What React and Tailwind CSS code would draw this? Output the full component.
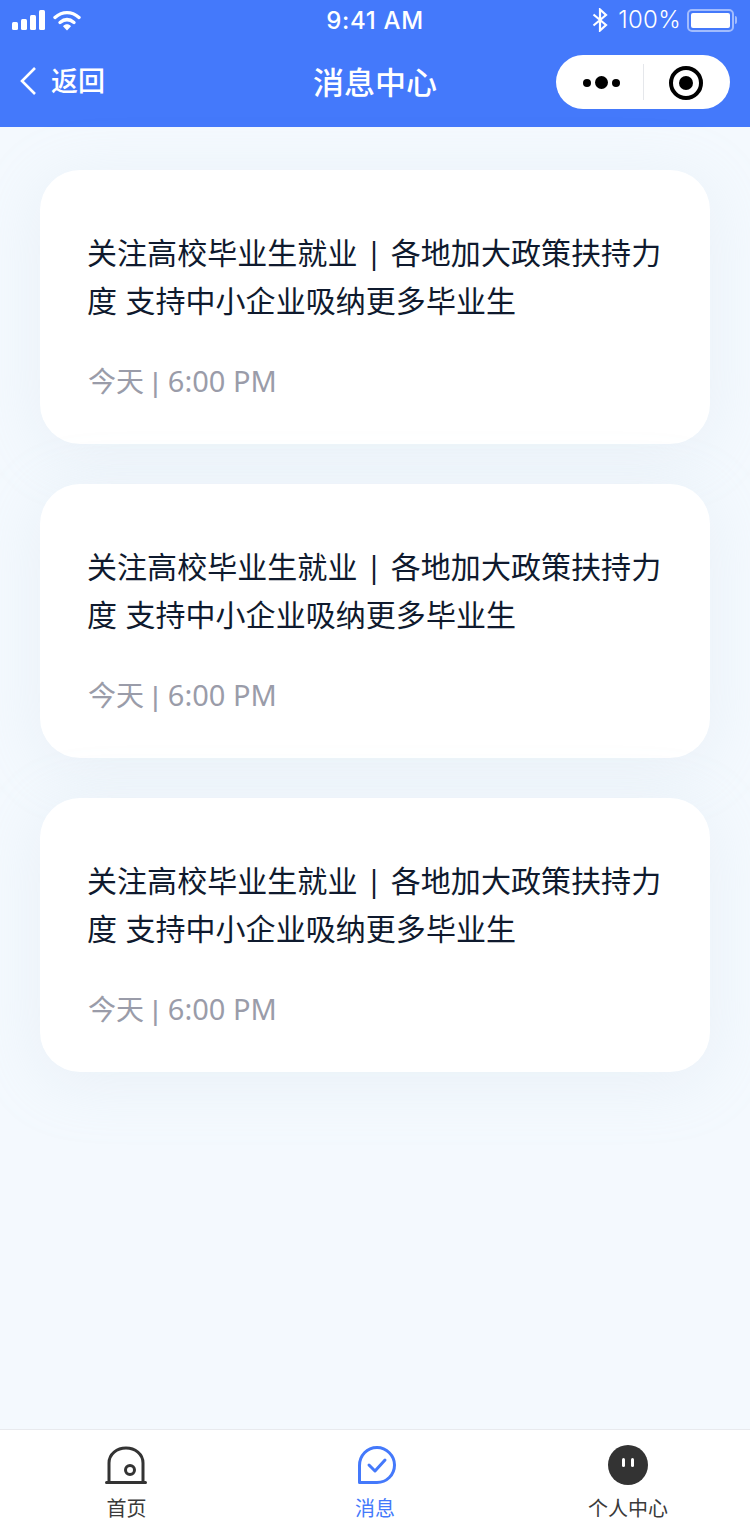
const FONT = "font-['Noto_Sans','Noto_Sans_CJK_SC',sans-serif]";

function StatusBar() {
  return (
    <div className="relative flex h-10 items-center justify-between pl-3 pr-[13px] text-white">
      <div className="flex items-center gap-[8px]">
        <div className="flex items-end gap-[3px]">
          <span className="h-[8px] w-[6px] rounded-[1.5px] bg-white" />
          <span className="h-[11px] w-[6px] rounded-[1.5px] bg-white" />
          <span className="h-[15px] w-[6px] rounded-[1.5px] bg-white" />
          <span className="h-[20px] w-[6px] rounded-[1.5px] bg-white" />
        </div>
        <svg width="28" height="21" viewBox="0 0 28 21" fill="none">
          <path d="M2 7.5C9.5 1 18.5 1 26 7.5" stroke="white" strokeWidth="3.4" strokeLinecap="round" />
          <path d="M7 12.5C11.5 8.8 16.5 8.8 21 12.5" stroke="white" strokeWidth="3.4" strokeLinecap="round" />
          <path d="M10 16.2C12.5 13.6 15.5 13.6 18 16.2L14 20.5Z" fill="white" />
        </svg>
      </div>
      <span className="absolute left-1/2 top-[5px] -translate-x-1/2 font-['Inter',sans-serif] text-[24px] leading-[32px] font-medium tracking-[0.7px]">
        9:41 AM
      </span>
      <div className="flex items-center">
        <svg width="16" height="24" viewBox="0 0 16 24" fill="none" className="mr-[10px]">
          <path d="M1.5 6.5L14 17L8 22.5V1.5L14 7L1.5 17.5" stroke="white" strokeWidth="2.2" />
        </svg>
        <span className="font-['Inter',sans-serif] text-[24px] leading-[32px] font-light tracking-[0.3px]">100%</span>
        <div className="ml-[6px] h-[23px] w-[47px] rounded-[5px] border-2 border-white/50 p-[2px]">
          <div className="h-full w-full rounded-[2px] bg-white" />
        </div>
        <div className="ml-[1px] h-[8px] w-[2px] rounded-r-full bg-white/50" />
      </div>
    </div>
  );
}

function NavBar() {
  return (
    <div className="relative flex h-[87px] items-start justify-between pt-[15px] pl-5 pr-5">
      <div className="flex items-center gap-[15px] pt-[11px] text-white">
        <svg width="16" height="30" viewBox="0 0 16 30" fill="none">
          <path d="M15 2L2 15L15 28" stroke="white" strokeWidth="2.6" />
        </svg>
        <span className="text-[27px] leading-[30px] font-medium">返回</span>
      </div>
      <span className="absolute left-1/2 top-[21px] -translate-x-1/2 text-[31px] leading-[42px] font-medium text-white">
        消息中心
      </span>
      <div className="flex h-[54px] w-[174px] items-center rounded-full bg-white">
        <div className="flex flex-1 items-center justify-center gap-[4px] pt-px pl-[4px]">
          <span className="h-[8px] w-[8px] rounded-full bg-black" />
          <span className="h-[13px] w-[13px] rounded-full bg-black" />
          <span className="h-[8px] w-[8px] rounded-full bg-black" />
        </div>
        <div className="h-[36px] w-px bg-gray-200" />
        <div className="flex w-[86px] items-center justify-center pt-px pr-[2px]">
          <div className="flex h-[34px] w-[34px] items-center justify-center rounded-full border-[4px] border-black">
            <span className="h-[14px] w-[14px] rounded-full bg-black" />
          </div>
        </div>
      </div>
    </div>
  );
}

function MessageCard() {
  return (
    <div className="rounded-[40px] bg-white pl-[47px] pr-[40px] pt-[59px] pb-[41px] shadow-[0_10px_60px_rgba(205,218,228,0.25)]">
      <p className="text-[30px] leading-[48px] tracking-[0.05px] text-[#0f1a2e] [word-spacing:0.5px]">
        关注高校毕业生就业 | 各地加大政策扶持力度 支持中小企业吸纳更多毕业生
      </p>
      <p className="mt-[36px] pl-px text-[28px] leading-[40px] text-[#9a9ca9]">
        今天<span className="font-['Liberation_Sans',sans-serif]">{" | "}</span>
        <span className="ml-px text-[29px]">6:00 PM</span>
      </p>
    </div>
  );
}

function TabBar() {
  return (
    <div className="grid h-[99px] grid-cols-3 border-t border-[#e8eaee] bg-white">
      <div className="flex flex-col items-center pt-[15px] pl-[3px]">
        <svg width="42" height="40" viewBox="0 0 42 40" fill="none" className="-ml-[2px]">
          <path d="M4 37V18C4 9 12 3 21 3C30 3 38 9 38 18V37" stroke="#333" strokeWidth="3" />
          <circle cx="25" cy="25" r="4.5" stroke="#333" strokeWidth="3" />
          <path d="M1.5 37.5H40.5" stroke="#333" strokeWidth="3" strokeLinecap="round" />
        </svg>
        <span className="mt-[9px] text-[20px] leading-[30px] text-[#3a3a3a]">首页</span>
      </div>
      <div className="flex flex-col items-center pt-[15px]">
        <svg width="42" height="40" viewBox="-2 0 42 40" fill="none">
          <path d="M3.5 37.5V20.5C3.500 10.500 11 2.500 21 2.500C30.500 2.500 38.500 10.500 38.500 20C38.500 30 30.500 37.500 21 37.500Z" stroke="#4479fb" strokeWidth="3" strokeLinejoin="round" />
          <path d="M13 20L19 26L29 15" stroke="#4479fb" strokeWidth="3" strokeLinecap="round" strokeLinejoin="round" />
        </svg>
        <span className="mt-[9px] text-[20px] leading-[30px] text-[#4479fb]">消息</span>
      </div>
      <div className="flex flex-col items-center pt-[15px] pl-[6px]">
        <div className="flex h-10 w-10 items-start justify-center gap-[6px] rounded-full bg-[#333] pt-[13px]">
          <span className="h-[9px] w-[3px] rounded-full bg-white" />
          <span className="h-[9px] w-[3px] rounded-full bg-white" />
        </div>
        <span className="mt-[9px] text-[20px] leading-[30px] text-[#3a3a3a]">个人中心</span>
      </div>
    </div>
  );
}

export default function App() {
  return (
    <div className={`flex h-[1528px] w-[750px] flex-col bg-[#f4f9fe] ${FONT}`}>
      <div className="bg-[#4479fb]">
        <StatusBar />
        <NavBar />
      </div>
      <div className="flex flex-1 flex-col gap-10 px-10 pt-[43px]">
        <MessageCard />
        <MessageCard />
        <MessageCard />
      </div>
      <TabBar />
    </div>
  );
}
